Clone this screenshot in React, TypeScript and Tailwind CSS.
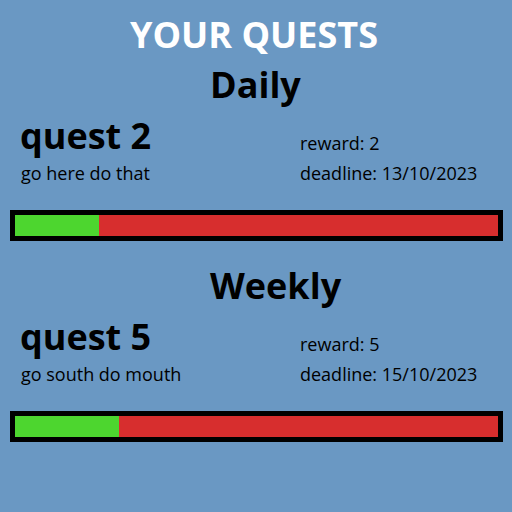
const quests = [
  {
    period: 'Daily',
    name: 'quest 2',
    desc: 'go here do that',
    reward: 2,
    deadline: '13/10/2023',
    progress: 17.4,
  },
  {
    period: 'Weekly',
    name: 'quest 5',
    desc: 'go south do mouth',
    reward: 5,
    deadline: '15/10/2023',
    progress: 21.5,
  },
]

function QuestBlock({ q, first }: { q: (typeof quests)[number]; first: boolean }) {
  return (
    <section className={first ? '' : 'mt-[20px]'}>
      <h2 className="pl-[210px] text-[36px] font-bold leading-[50px] text-black">{q.period}</h2>
      <div className="mt-[3px] flex">
        <div className="w-[300px] pl-[20px]">
          <div className="text-[36px] font-bold leading-[45px]">{q.name}</div>
          <div className="pl-[1px] text-[18px] leading-[30px]">{q.desc}</div>
        </div>
        <div className="pt-[15px] text-[18px] leading-[30px]">
          <div>reward: {q.reward}</div>
          <div>deadline: {q.deadline}</div>
        </div>
      </div>
      <div className="mx-[10px] mt-[22px] h-[31px] w-[493px] border-[5px] border-black bg-[#d72e2e]">
        <div className="h-full bg-[#4dd62f]" style={{ width: `${q.progress}%` }} />
      </div>
    </section>
  )
}

export default function App() {
  return (
    <div
      className="h-[512px] w-[512px] bg-[#6a98c3] text-black"
      style={{ fontFamily: '"Open Sans", sans-serif' }}
    >
      <h1 className="pr-[4px] pt-[10px] text-center text-[36px] font-bold leading-[50px] text-white">YOUR QUESTS</h1>
      {quests.map((q, i) => (
        <QuestBlock key={q.period} q={q} first={i === 0} />
      ))}
    </div>
  )
}
